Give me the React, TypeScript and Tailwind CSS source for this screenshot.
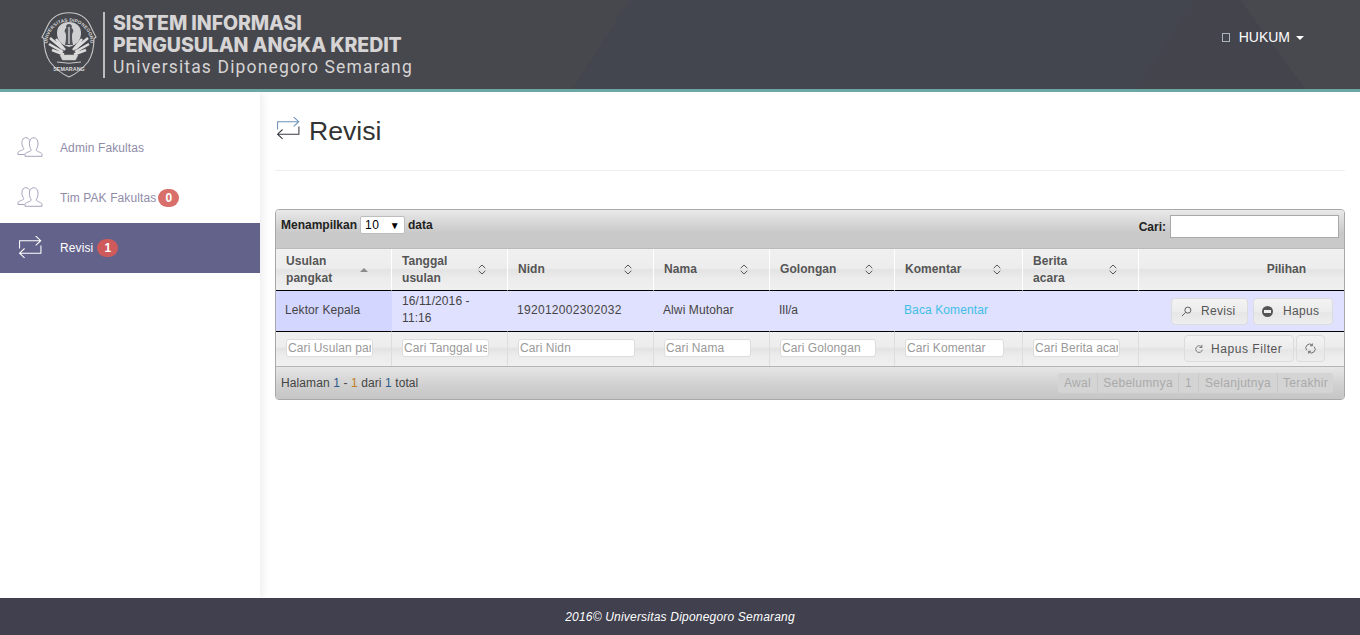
import React from "react";

function Repeat({ className, c1 = "#3a3a44", c2 = "#6f93ba" }: { className?: string; c1?: string; c2?: string }) {
  return (
    <svg viewBox="0 0 24 24" className={className} fill="none" strokeWidth="1">
      <path d="M17 0 L21.8 4.5 L17 9 M21.8 4.5 H1.5 V12" stroke={c2} />
      <path d="M6.3 12 L1.5 16.5 L6.3 21 M1.5 16.5 H22 V9" stroke={c1} />
    </svg>
  );
}

function People({ className }: { className?: string }) {
  return (
    <svg viewBox="0 0 26 20" className={className} fill="none" stroke="#a6a3bd" strokeWidth="1">
      <path d="M1 17.5 V15.6 C1 14 5.6 13.6 7 11.8 C5.6 10 4.9 8 4.9 5.6 C4.9 2.6 6.5 .7 8.8 .7 C10.7 .7 12 1.8 12.6 3.4" />
      <path d="M1 17.5 H7.6" />
      <path d="M8 19.3 H25 V17.2 C25 15.5 20.3 15 19 13 C20.4 11 21 9 21 6.2 C21 3 19.2 .7 16.7 .7 C14.2 .7 12.4 3 12.4 6.2 C12.4 9 13 11 14.4 13 C13.2 15 8 15.5 8 17.2 Z" />
    </svg>
  );
}

function Logo() {
  return (
    <svg viewBox="0 0 56 66" className="w-[56px] h-[66px]" fill="none" stroke="#c9c9c9">
      <path d="M28 .8 C37 .8 45 5 49 13 C50.5 16 52 20 55 25 L53 26.5 C53 36 51 44 47 50 C42 56 35 62 28 65 C21 62 14 56 9 50 C5 44 3 36 3 26.5 L1 25 C4 20 5.5 16 7 13 C11 5 19 .8 28 .8 Z" strokeWidth="1.1" />
      <defs>
        <path id="ring" d="M6.5 31 A21.5 21.5 0 0 1 49.5 31" />
      </defs>
      <text fontSize="4.7" fontWeight="700" fill="#d8d8d8" stroke="none" fontFamily="Liberation Sans, sans-serif" letterSpacing="0.15">
        <textPath href="#ring" startOffset="50%" textAnchor="middle">UNIVERSITAS DIPONEGORO</textPath>
      </text>
      <path d="M28 10 C21 10 16 14 16 21 C16 28 20 33 28 35 C36 33 40 28 40 21 C40 14 35 10 28 10 Z" fill="#d0d0d2" stroke="none" />
      <path d="M28 12 C25.5 12 24.5 14 25.4 16 C23.6 17 23 20 24.6 21 C25.4 24 25 28 24 33 H32 C31 28 30.6 24 31.4 21 C33 20 32.4 17 30.6 16 C31.5 14 30.5 12 28 12 Z" fill="#52535a" stroke="none" />
      <path d="M28 15 V32" stroke="#d0d0d2" strokeWidth="1.4" />
      <path d="M9 26 L22 37 M8 32 L22 40 M11 38 L23 42.5 M47 26 L34 37 M48 32 L34 40 M45 38 L33 42.5 M15 27 L24 38 M41 27 L32 38" strokeWidth="2.5" stroke="#dcdcdc" />
      <path d="M19 43 H37 L34.5 48 H21.5 Z" fill="#d6d6d6" strokeWidth="0.5" />
      <path d="M16 50 Q28 52.5 40 50" strokeWidth="1" />
      <text x="28" y="58.5" textAnchor="middle" fontSize="5.4" fontWeight="700" fill="#dcdcdc" stroke="none" fontFamily="Liberation Sans, sans-serif">SEMARANG</text>
    </svg>
  );
}

function Sort({ active }: { active?: boolean }) {
  if (active) return <span className="w-0 h-0 border-x-[4px] border-x-transparent border-b-[4px] border-b-[#8a8a8a] shrink-0 mr-[2px]" />;
  return (
    <svg viewBox="0 0 8 11" className="w-[8px] h-[11px] shrink-0" fill="none" stroke="#555" strokeWidth="1">
      <path d="M.7 4.2 L4 1 L7.3 4.2" />
      <path d="M.7 6.8 L4 10 L7.3 6.8" />
    </svg>
  );
}

const cols = [
  { w: "w-[116px]", t: "Usulan pangkat", active: true, ph: "Cari Usulan pangkat", two: true },
  { w: "w-[116px]", t: "Tanggal usulan", ph: "Cari Tanggal usulan", two: true },
  { w: "w-[146px]", t: "Nidn", ph: "Cari Nidn", two: false },
  { w: "w-[116px]", t: "Nama", ph: "Cari Nama", two: false },
  { w: "w-[125px]", t: "Golongan", ph: "Cari Golongan", two: false },
  { w: "w-[128px]", t: "Komentar", ph: "Cari Komentar", two: false },
  { w: "w-[116px]", t: "Berita acara", ph: "Cari Berita acara", two: true },
];

const band = "bg-[linear-gradient(#f0f0f0_0%,#ededed_45%,#e3e3e3_50%,#ececec_70%,#f0f0f0_100%)]";
const bar = "bg-[linear-gradient(#e9e9e9_0%,#c9c9c9_60%,#c9c9c9_100%)]";
const footBar = "bg-[linear-gradient(#e6e6e6_0%,#cfcfcf_60%,#c6c6c6_100%)]";
const btn = "inline-flex items-center rounded-[4px] border border-[#dcdcdc] bg-[linear-gradient(#f3f3f3,#ececec_50%,#e6e6e6_55%,#eeeeee)] text-[#555] tracking-[0.3px]";
const badge = "inline-flex items-center justify-center w-[21px] h-[18px] rounded-full text-white text-[12px] font-bold";

export default function App() {
  return (
    <div className="h-[635px] flex flex-col bg-white text-[12px] text-[#333] font-['Liberation_Sans',Arial,sans-serif] overflow-hidden">
      <header className="relative h-[92px] shrink-0 border-b-[3px] border-[#6ba7a3] bg-[#46474f] flex items-center pl-[41px] pr-[56px]">
        <svg className="absolute inset-0 w-[1360px] h-[89px]" viewBox="0 0 1360 89" aria-hidden="true">
          <polygon points="0,0 630,0 572,89 0,89" fill="#4a4a4e" opacity="0.45" />
          <polygon points="630,0 1194,0 1136,89 572,89" fill="#42454f" opacity="0.4" />
          <polygon points="1194,0 1240,0 1305,89 1136,89" fill="#42434d" opacity="0.6" />
          <polygon points="1240,0 1360,0 1360,89 1305,89" fill="#4a4a50" opacity="0.6" />
        </svg>
        <div className="relative flex items-center w-full">
          <Logo />
          <div className="ml-[6px] w-[2px] h-[66px] bg-[#bdbdbd]" />
          <div className="ml-[8px] font-['Inter',sans-serif] text-[#d6d4d4]">
            <div className="text-[19.5px] leading-[22px] pt-[1px] font-extrabold tracking-[-0.1px]">SISTEM INFORMASI</div>
            <div className="text-[19.5px] leading-[22px] font-extrabold tracking-[-0.1px]">PENGUSULAN ANGKA KREDIT</div>
            <div className="text-[17.5px] leading-[22px] font-normal tracking-[1.15px] font-['Roboto',sans-serif]">Universitas Diponegoro Semarang</div>
          </div>
          <div className="ml-auto flex items-center text-white text-[14px] -mt-[14px]">
            <span className="w-[8px] h-[9px] border border-[#a9b7bd] mr-[9px]" />
            <span>HUKUM</span>
            <span className="ml-[6px] w-0 h-0 border-x-[4px] border-x-transparent border-t-[4px] border-t-white" />
          </div>
        </div>
      </header>

      <div className="flex-1 flex min-h-0">
        <aside className="w-[260px] shrink-0 pt-[31px] shadow-[3px_0_8px_rgba(0,0,0,0.07)] text-[#8f8ca8] tracking-[0.1px]">
          <div className="h-[50px] flex items-center pl-[17px]">
            <People className="w-[26px] h-[20px] mr-[17px] -mt-[2px]" />
            <span>Admin Fakultas</span>
          </div>
          <div className="h-[50px] flex items-center pl-[17px]">
            <People className="w-[26px] h-[20px] mr-[17px] -mt-[2px]" />
            <span>Tim PAK Fakultas</span>
            <span className={`${badge} ml-[2px] bg-[#d96f6b]`}>0</span>
          </div>
          <div className="h-[50px] flex items-center pl-[18px] bg-[#63628a] text-white">
            <Repeat className="w-[25px] h-[25px] mr-[17px]" c1="#ffffff" c2="#ffffff" />
            <span>Revisi</span>
            <span className={`${badge} ml-[4px] bg-[#cf5a5c]`}>1</span>
          </div>
        </aside>

        <main className="flex-1 min-w-0 px-[15px]">
          <div className="h-[79px] border-b border-[#eeeeee] flex items-start pt-[22px] pl-[1px]">
            <Repeat className="w-[25px] h-[25px] mt-[3px]" />
            <h1 className="ml-[8px] text-[26.6px] leading-[34px] text-[#333]">Revisi</h1>
          </div>

          <section className="mt-[38px] rounded-[4px] border border-[#a8a8a8] overflow-hidden">
            <div className={`h-[39px] ${bar} border-b border-[#bbbbbb] flex items-start justify-between px-[5px] pt-[5px] font-bold text-[#222]`}>
              <div className="flex items-center h-[18px] mt-[1px]">
                <span>Menampilkan</span>
                <span className="mx-[3px] w-[45px] h-[18px] bg-white border border-[#bdbdbd] rounded-[2px] flex items-center justify-between px-[4px] pr-[4px] font-normal text-black tracking-[0.5px]">
                  <span>10</span>
                  <span className="text-[10px]">▼</span>
                </span>
                <span>data</span>
              </div>
              <div className="flex items-center">
                <span className="mr-[4px]">Cari:</span>
                <span className="w-[169px] h-[23px] bg-white border border-[#a9a9a9]" />
              </div>
            </div>

            <table className="w-full table-fixed border-separate border-spacing-0">
              <colgroup>
                {cols.map((c) => <col key={c.t} className={c.w} />)}
                <col />
              </colgroup>
              <thead>
                <tr className={band}>
                  {cols.map((c) => (
                    <th key={c.t} className="h-[42px] border-r border-b border-r-white border-b-black pl-[10px] text-left font-bold text-[#555] tracking-[0.05px] leading-[17px] align-middle">
                      <div className={`flex items-center justify-between pr-[21px] ${c.two ? "" : "-mt-[1px]"}`}>
                        <span className="w-[56px] block">{c.t}</span>
                        <Sort active={c.active} />
                      </div>
                    </th>
                  ))}
                  <th className="h-[42px] border-b border-b-black text-right pr-[38px] font-bold text-[#555] align-middle">
                    <span className="relative -top-[1px]">Pilihan</span>
                  </th>
                </tr>
              </thead>
              <tbody>
                <tr className="bg-[#e0e0ff] text-[#444] tracking-[0.1px] leading-[17px]">
                  <td className="h-[40px] pl-[9px] pb-[2px] bg-[#d3d6ff]">Lektor Kepala</td>
                  <td className="pl-[10px] pr-[30px] pb-[2px]">16/11/2016 - 11:16</td>
                  <td className="pl-[9px] pb-[2px] tracking-[0.3px]">192012002302032</td>
                  <td className="pl-[9px] pb-[2px]">Alwi Mutohar</td>
                  <td className="pl-[9px] pb-[2px] tracking-[-0.3px]">III/a</td>
                  <td className="pl-[9px] pb-[2px] text-[#3fbfe6]">Baca Komentar</td>
                  <td />
                  <td className="pr-[11px]">
                    <div className="flex justify-end gap-[5px]">
                      <span className={`${btn} h-[27px] pl-[9px] w-[77px]`}>
                        <svg viewBox="0 0 12 12" className="w-[11px] h-[11px] mr-[9px]" fill="none" stroke="#555"><circle cx="7.5" cy="4.5" r="3.3" /><path d="M5 7 L1 11" /></svg>
                        Revisi
                      </span>
                      <span className={`${btn} h-[27px] pl-[8px] w-[80px]`}>
                        <span className="relative w-[11px] h-[11px] rounded-full bg-[#555] mr-[10px]"><span className="absolute left-[2px] right-[2px] top-[4px] h-[3px] bg-[#eee]" /></span>
                        Hapus
                      </span>
                    </div>
                  </td>
                </tr>
                <tr className={band}>
                  {cols.map((c) => (
                    <td key={c.t} className="h-[35px] border-t border-t-black border-r border-r-[#dddddd] pl-[10px] pr-[18px]">
                      <input readOnly placeholder={c.ph} className="block w-full h-[18px] -mt-[2px] bg-white border border-[#dcdcdc] rounded-[3px] px-[1px] text-[12px] tracking-[0.1px] placeholder:text-[#999] outline-none" />
                    </td>
                  ))}
                  <td className="border-t border-t-black pr-[19px]">
                    <div className="flex justify-end gap-[2px] -mt-[1px]">
                      <span className={`${btn} h-[27px] pl-[8px] w-[110px] tracking-[0.55px]`}>
                        <svg viewBox="0 0 12 12" className="w-[10px] h-[10px] mr-[7px] ml-[1px]" fill="none" stroke="#666"><path d="M9.5 4 A4 4 0 1 0 10 7 M9.5 1 V4.2 H6.5" /></svg>
                        Hapus Filter
                      </span>
                      <span className={`${btn} h-[27px] w-[29px] justify-center`}>
                        <svg viewBox="0 0 12 12" className="w-[11px] h-[11px]" fill="none" stroke="#666"><path d="M2 8 A4 4 0 0 1 8 2.5 M8 .5 V3 H5.5 M10 4 A4 4 0 0 1 4 9.5 M4 11.5 V9 H6.5" /></svg>
                      </span>
                    </div>
                  </td>
                </tr>
              </tbody>
            </table>

            <div className={`h-[33px] ${footBar} border-t border-[#b5b5b5] flex items-center justify-between pl-[5px] pr-[11px] text-[#444] tracking-[0.1px]`}>
              <span>Halaman <span className="text-[#2a5a8a]">1</span> - <span className="text-[#c08020]">1</span> dari <span className="text-[#2a5a8a]">1</span> total</span>
              <div className="flex h-[20px] rounded-[3px] bg-[#d4d4d4] text-[#aaaaaa] tracking-[0.3px] divide-x divide-[#c9c9c9]">
                <span className="w-[40px] flex items-center justify-center">Awal</span>
                <span className="w-[81px] flex items-center justify-center">Sebelumnya</span>
                <span className="w-[20px] flex items-center justify-center">1</span>
                <span className="w-[79px] flex items-center justify-center">Selanjutnya</span>
                <span className="w-[55px] flex items-center justify-center">Terakhir</span>
              </div>
            </div>
          </section>
        </main>
      </div>

      <footer className="h-[37px] shrink-0 bg-[#40404e] flex items-center justify-center pt-[1px] text-white italic text-[12px] tracking-[0.2px]">
        2016© Universitas Diponegoro Semarang
      </footer>
    </div>
  );
}
